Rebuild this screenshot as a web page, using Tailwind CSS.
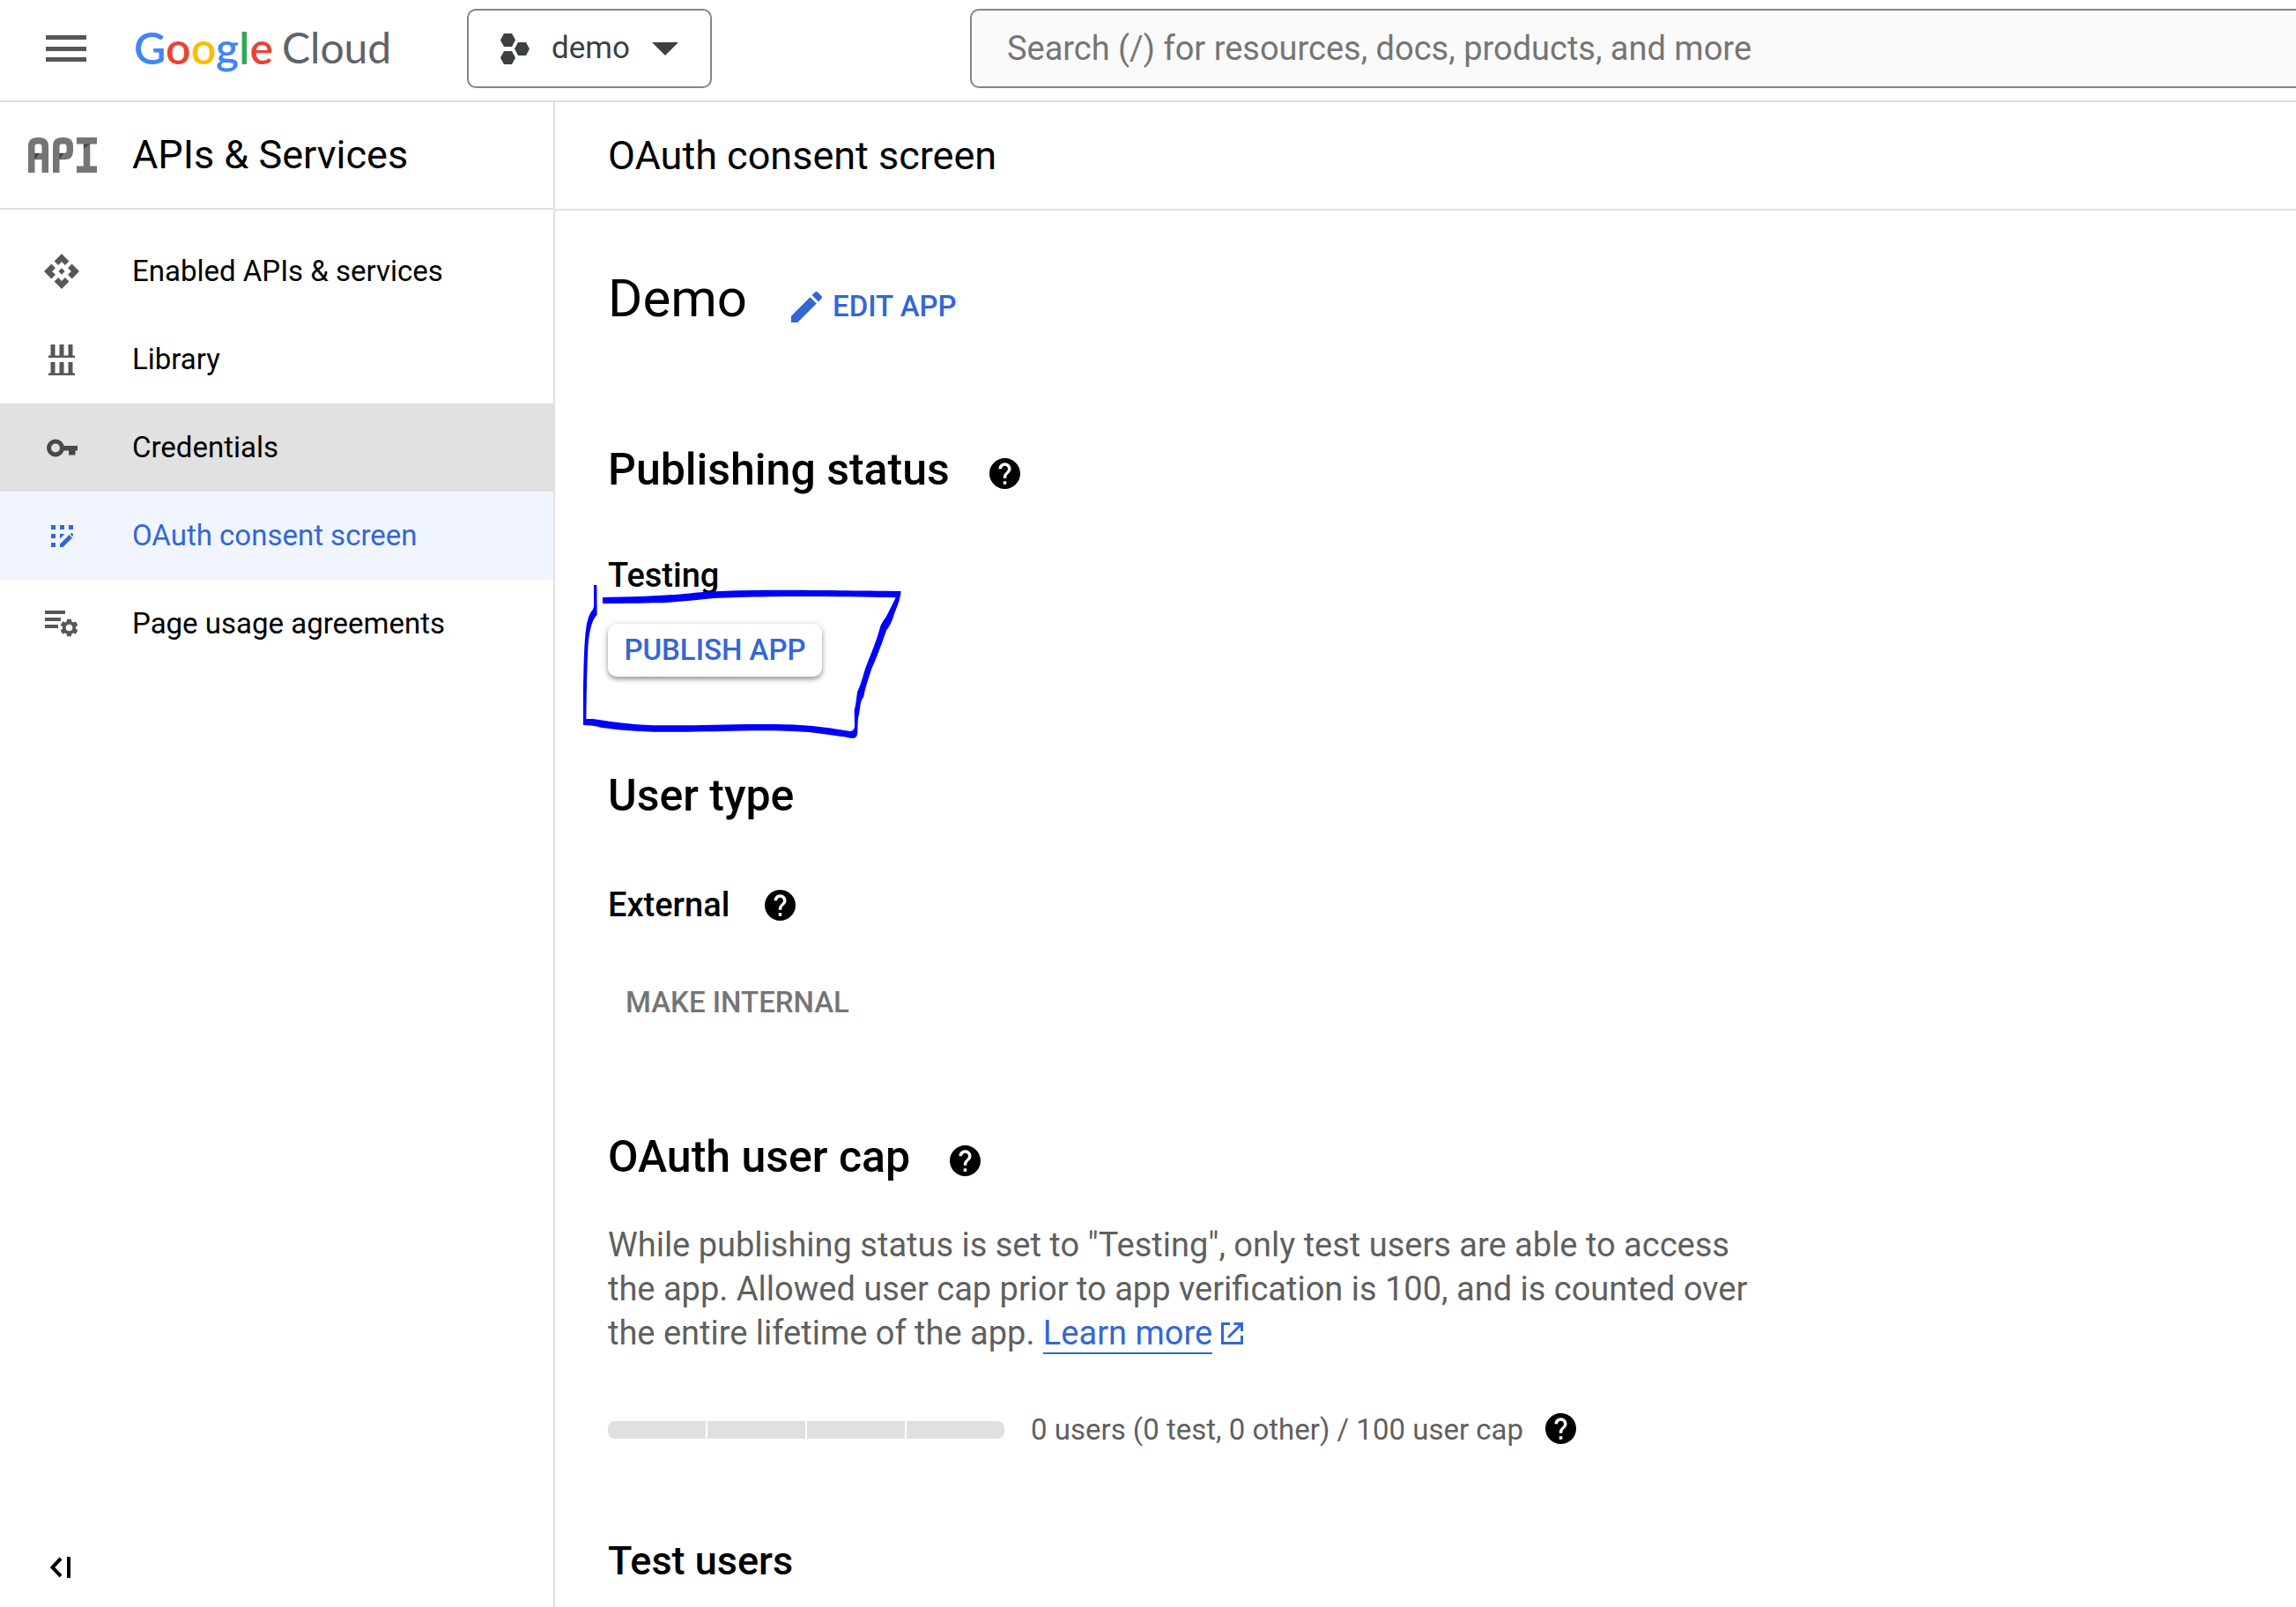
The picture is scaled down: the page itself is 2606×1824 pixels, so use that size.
<!DOCTYPE html>
<html lang="en">
<head>
<meta charset="utf-8">
<title>OAuth consent screen</title>
<script src="https://cdn.jsdelivr.net/npm/@tailwindcss/browser@4"></script>
</head>
<body class="flex min-h-screen flex-col overflow-x-hidden bg-white font-[Roboto,sans-serif] text-black">
<svg class="hidden">
  <symbol id="help" viewBox="2 2 20 20"><path fill="currentColor" d="M12 2C6.48 2 2 6.48 2 12s4.48 10 10 10 10-4.48 10-10S17.52 2 12 2zm1 17h-2v-2h2v2zm2.07-7.75l-.9.92C13.45 12.9 13 13.5 13 15h-2v-.5c0-1.1.45-2.1 1.17-2.83l1.24-1.26c.37-.36.59-.86.59-1.41 0-1.1-.9-2-2-2s-2 .9-2 2H8c0-2.21 1.79-4 4-4s4 1.79 4 4c0 .88-.36 1.68-.93 2.25z"/></symbol>
</svg>

<header class="flex h-[116px] shrink-0 items-start border-b-2 border-[#e0e0e0]">
  <button aria-label="Main menu" class="mt-[40px] ml-[52px] flex h-[30px] w-[46px] flex-col justify-between">
    <span class="h-[5px] w-full bg-[#575757]"></span><span class="h-[5px] w-full bg-[#575757]"></span><span class="h-[5px] w-full bg-[#575757]"></span>
  </button>
  <a href="#" class="ml-[54px] flex h-[108px] w-[378px] shrink-0 items-center font-[Lato,sans-serif] whitespace-nowrap">
    <span class="text-[50px] font-semibold"><span class="text-[#4285f4]">G</span><span class="text-[#ea4335]">o</span><span class="text-[#fbbc04]">o</span><span class="text-[#4285f4]">g</span><span class="text-[#34a853]">l</span><span class="text-[#ea4335]">e</span></span>
    <span class="ml-[10px] text-[48px] text-[#5f6368]">Cloud</span>
  </a>
  <button class="mt-[10px] flex h-[90px] shrink-0 items-center gap-[25px] rounded-[10px] border-2 border-[#80868b] px-[36px] text-[35px] text-[#3c4043]">
    <svg class="h-[35px] w-[33px]" viewBox="0 0 33 35" fill="#3c4043"><path d="M4 0h9l4 7.500-4 7.500H4L0 7.500zM20 10h9l4 7.500-4 7.500h-9l-4-7.500zM4 20h9l4 7.500-4 7.500H4l-4-7.500z"/></svg>
    <span>demo</span>
    <svg class="h-[15px] w-[30px]" viewBox="0 0 30 15" fill="#3c4043"><path d="M0 0h30L15 15z"/></svg>
  </button>
  <input type="text" aria-label="Search" placeholder="Search (/) for resources, docs, products, and more" class="mt-[10px] ml-[293px] h-[90px] min-w-0 flex-1 rounded-l-[10px] border-2 border-r-0 border-[#80868b] bg-[#fafafa] px-[40px] text-[38px] placeholder:text-[#757575]">
</header>

<div class="flex flex-1">
  <aside class="flex w-[630px] shrink-0 flex-col border-r-2 border-[#e0e0e0]">
    <div class="flex h-[122px] items-center border-b-2 border-[#e0e0e0] pl-[32px]">
      <svg class="h-[40px] w-[78px]" viewBox="0 0 78 40" fill="none" stroke="#757575" stroke-width="7.500" aria-hidden="true">
        <path d="M3.750 40V10Q3.750 3.750 10 3.750h3Q19.250 3.750 19.250 10V40M4 21.500h15"/>
        <path d="M31.750 40V10Q31.750 3.750 38 3.750h3Q47.250 3.750 47.250 10v5.500Q47.250 21.500 41 21.500h-9"/>
        <path d="M55 3.750h23M66.500 4v32M55 36.250h23"/>
        <path fill="#424242" stroke="none" d="M7.500 18h5l-5 7zM35.500 18h5l-5 7zM63 7.500h7.500l-7.500 5z"/>
      </svg>
      <h2 class="ml-[40px] text-[45px] leading-[60px]">APIs &amp; Services</h2>
    </div>
    <nav class="flex flex-col pt-[20px] text-[33px]">
      <a href="#" class="flex h-[100px] items-center gap-[38px] pl-[28px]">
        <span class="flex w-[84px] justify-center"><svg class="size-[40px]" viewBox="1 1 22 22" fill="#575757"><path d="M14 12l-2 2-2-2 2-2 2 2zm-2-6l2.120 2.120 2.500-2.500L12 1 7.380 5.620l2.500 2.500L12 6zm-6 6l2.120-2.120-2.500-2.500L1 12l4.620 4.620 2.500-2.500L6 12zm12 0l-2.120 2.120 2.500 2.500L23 12l-4.620-4.620-2.500 2.500L18 12zm-6 6l-2.120-2.120-2.500 2.500L12 23l4.620-4.620-2.500-2.500L12 18z"/></svg></span>
        Enabled APIs &amp; services</a>
      <a href="#" class="flex h-[100px] items-center gap-[38px] pl-[28px]">
        <span class="flex w-[84px] justify-center"><svg class="h-[35px] w-[30px]" viewBox="0 0 30 35" fill="#575757"><path d="M0 12.500h2.500V0h5v12.500h5V0h5v12.500h5V0h5v12.500H30V15H0zM0 32.500h2.500V20h5v12.500h5V20h5v12.500h5V20h5v12.500H30V35H0z"/></svg></span>
        Library</a>
      <a href="#" class="flex h-[100px] items-center gap-[38px] bg-[#e1e1e1] pl-[28px]">
        <span class="flex w-[84px] justify-center"><svg class="h-[21px] w-[35px]" viewBox="0 0 35 21"><circle cx="10" cy="10.500" r="7.500" fill="none" stroke="#484848" stroke-width="5"/><path fill="#484848" d="M18 8h17v5.500h-2.500V18.500H25V13.500h-7z"/></svg></span>
        Credentials</a>
      <a href="#" aria-current="page" class="flex h-[100px] items-center gap-[38px] bg-[#f0f5ff] pl-[28px] text-[#3367d6]">
        <span class="flex w-[84px] justify-center"><svg class="size-[25px]" viewBox="0 0 25 25" fill="#3367d6"><path d="M0 0h5v5H0zM10 0h5v5h-5zM20 0h5v5h-5zM0 10h5v5H0zM10 10h5.500L10.500 15H10zM0 20h5v5H0zM10 25v-3.500L20.500 11l3.500 3.500L13.500 25zM21.500 10l1-.8q1-.5 1.800.3l.6.6q.8.800 0 1.800l-.8 1z"/></svg></span>
        OAuth consent screen</a>
      <a href="#" class="flex h-[100px] items-center gap-[38px] pl-[28px]">
        <span class="flex w-[84px] justify-center"><svg class="h-[30px] w-[38px]" viewBox="0 0 38 30" fill="#575757"><path d="M0 0h23v4H0zM0 8h18v4H0zM0 16h15v4H0z"/><svg x="17.500" y="9.500" width="20" height="20" viewBox="2 2 20 20"><path fill-rule="evenodd" d="M19.430 12.980c.04-.32.070-.64.070-.98s-.03-.66-.07-.98l2.110-1.650c.19-.15.240-.42.120-.64l-2-3.460c-.12-.22-.39-.3-.61-.22l-2.490 1c-.52-.4-1.080-.73-1.690-.98l-.38-2.650C14.460 2.180 14.250 2 14 2h-4c-.25 0-.46.180-.49.420l-.38 2.650c-.61.250-1.170.590-1.690.980l-2.490-1c-.23-.09-.49 0-.61.220l-2 3.460c-.13.220-.07.490.12.640l2.110 1.650c-.04.320-.07.650-.07.980s.03.660.070.980l-2.110 1.650c-.19.150-.24.420-.12.640l2 3.460c.12.220.39.300.61.220l2.490-1c.52.400 1.080.730 1.690.980l.38 2.650c.03.240.24.420.49.420h4c.25 0 .46-.18.490-.42l.38-2.650c.61-.25 1.170-.59 1.690-.98l2.490 1c.23.090.49 0 .61-.22l2-3.460c.12-.22.070-.49-.12-.64zM12 15.800a3.800 3.800 0 1 1 0-7.600 3.800 3.800 0 0 1 0 7.600z"/></svg></svg></span>
        Page usage agreements</a>
    </nav>
    <button aria-label="Collapse menu" class="mt-auto mb-[33px] ml-[57px] w-[24px]">
      <svg class="size-[24px]" viewBox="0 0 24 24" fill="none" stroke="#000" stroke-width="4"><path d="M12 2L2.500 12l9.500 10M21 0v24"/></svg>
    </button>
  </aside>

  <main class="min-w-0 flex-1">
    <div class="flex h-[123px] items-center border-b-2 border-[#e0e0e0] pl-[60px]">
      <h1 class="text-[45px] leading-[60px]">OAuth consent screen</h1>
    </div>

    <div class="px-[60px] pt-[65px]">
      <div class="flex items-end gap-[50px]">
        <h2 class="text-[60px] leading-[70px]">Demo</h2>
        <button class="flex h-[52px] items-center gap-[12px] text-[33px] font-medium text-[#3367d6]">
          <svg class="size-[35px]" viewBox="3 3 18 18" fill="currentColor"><path d="M3 17.250V21h3.750L17.810 9.940l-3.750-3.750L3 17.250zM20.710 7.040c.39-.39.390-1.020 0-1.410l-2.340-2.340c-.39-.39-1.020-.39-1.410 0l-1.830 1.830 3.750 3.750 1.830-1.830z"/></svg>
          EDIT APP
        </button>
      </div>

      <section class="mt-[129px]">
        <div class="flex items-end gap-[45px]">
          <h3 class="text-[50px] leading-[60px] font-medium">Publishing status</h3>
          <button aria-label="Help: publishing status" class="pb-2"><svg class="size-[35px]"><use href="#help"/></svg></button>
        </div>
        <div class="relative mt-[65px]">
          <p class="text-[38px] leading-[50px] font-medium">Testing</p>
          <button class="mt-[30px] flex h-[60px] w-[243px] items-center justify-center rounded-[10px] bg-white text-[33px] font-medium whitespace-nowrap text-[#3367d6] shadow-[0_3px_5px_rgba(0,0,0,0.35),0_1px_12px_rgba(0,0,0,0.12)]">PUBLISH APP</button>
          <!-- hand-drawn marker loop around the publish button -->
          <svg class="pointer-events-none absolute -top-[29px] -left-[50px] h-[260px] w-[420px]" viewBox="0 0 1260 780" fill="#0000ff" aria-hidden="true">
            <path d="M132 237C240 236 340 232 410 225C460 219 500 216 550 215C700 210 860 213 1148 216C1146 240 1138 262 1126 290C1118 318 1110 335 1098 350C1086 385 1070 430 1048 480C1035 520 1025 550 1021 575C1008 590 1010 610 1005 635C1000 650 1001 670 1000 700Q997 717 985 717Q968 717 955 712C900 705 850 694 760 692C640 688 520 694 420 695C320 697 220 694 125 680Q100 672 66 672V540C68 450 70 380 76 340C80 312 88 290 98 280Q104 270 102 250V195H112L113 296Q104 306 100 315C90 340 84 370 82 410C78 500 77 580 76 651H100C180 664 260 673 330 673C450 674 560 668 700 669C800 668 880 676 975 693Q990 692 990 675L989 622C995 600 996 580 999 560C1010 535 1016 515 1026 480C1045 430 1065 385 1078 335C1086 315 1096 308 1104 290L1130 238C1000 236 850 233 700 235C620 236 560 238 510 240C440 247 380 255 300 256C240 258 180 258 132 258Z"/>
          </svg>
        </div>
      </section>

      <section class="mt-[105px]">
        <h3 class="text-[50px] leading-[60px] font-medium">User type</h3>
        <div class="mt-[69px] flex items-center gap-[40px]">
          <p class="text-[38px] leading-[50px] font-medium">External</p>
          <button aria-label="Help: user type"><svg class="size-[35px]"><use href="#help"/></svg></button>
        </div>
        <button class="mt-[56px] flex h-[60px] items-center px-[20px] text-[33px] font-medium text-[#757575]">MAKE INTERNAL</button>
      </section>

      <section class="mt-[115px]">
        <div class="flex items-end gap-[45px]">
          <h3 class="text-[50px] leading-[60px] font-medium">OAuth user cap</h3>
          <button aria-label="Help: user cap" class="pb-2"><svg class="size-[35px]"><use href="#help"/></svg></button>
        </div>
        <p class="mt-[45px] max-w-[1300px] text-[38px] leading-[50px] text-[#5f5f5f]">While publishing status is set to "Testing", only test users are able to access the app. Allowed user cap prior to app verification is 100, and is counted over the entire lifetime of the app. <a href="#" class="border-b-2 border-[#3367d6] text-[#3367d6]">Learn more</a><svg class="ml-[10px] inline size-[25px] align-baseline text-[#3367d6]" viewBox="0 0 25 25" fill="none" stroke="currentColor" stroke-width="3" aria-hidden="true"><path d="M10 1.500H1.500v22h22V15M14.500 1.500h9V10M23 2L8 17"/></svg></p>
        <div class="mt-[60px] flex items-center">
          <div class="flex h-[20px] w-[450px] gap-[2px] overflow-hidden rounded-[8px]" role="img" aria-label="0 of 100 users">
            <span class="flex-1 bg-[#e0e0e0]"></span><span class="flex-1 bg-[#e0e0e0]"></span><span class="flex-1 bg-[#e0e0e0]"></span><span class="flex-1 bg-[#e0e0e0]"></span>
          </div>
          <span class="ml-[30px] text-[33px] leading-[50px] text-[#5f5f5f]">0 users (0 test, 0 other) / 100 user cap</span>
          <button aria-label="Help: user count" class="mb-1 ml-[25px]"><svg class="size-[35px]"><use href="#help"/></svg></button>
        </div>
      </section>

      <h3 class="mt-[94px] text-[45px] leading-[60px] font-medium">Test users</h3>
    </div>
  </main>
</div>
</body>
</html>
